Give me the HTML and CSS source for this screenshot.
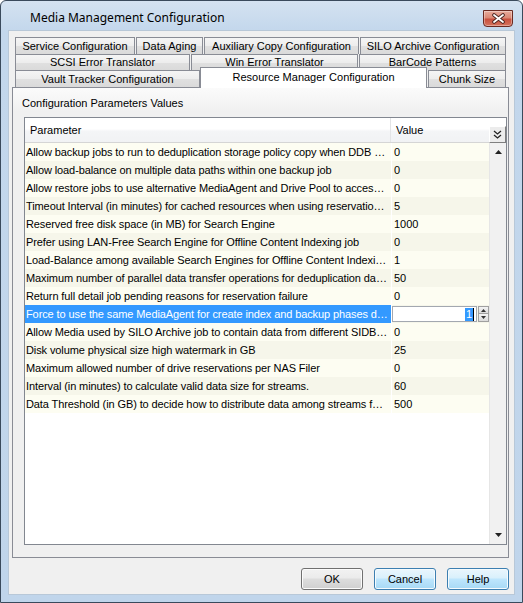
FILE: index.html
```html
<!DOCTYPE html>
<html>
<head>
<meta charset="utf-8">
<link rel="stylesheet" href="styles.css">
</head>
<body>
<div class="window">
  <div class="titlebar">
    <span class="title">Media Management Configuration</span>
    <div class="close">
      <svg width="13" height="11" viewBox="0 0 13 11">
        <path d="M2 2 L11 9 M11 2 L2 9" stroke="#4a2420" stroke-width="3.6" stroke-linecap="round" fill="none"/>
        <path d="M2 2 L11 9 M11 2 L2 9" stroke="#ffffff" stroke-width="1.8" stroke-linecap="round" fill="none"/>
      </svg>
    </div>
  </div>
  <div class="client">
    <div class="tabs">
      <div class="tab-row row1">
        <div class="tab t-service">Service Configuration</div>
        <div class="tab t-aging">Data Aging</div>
        <div class="tab t-aux">Auxiliary Copy Configuration</div>
        <div class="tab t-silo">SILO Archive Configuration</div>
      </div>
      <div class="tab-row row2">
        <div class="tab t-scsi">SCSI Error Translator</div>
        <div class="tab t-win">Win Error Translator</div>
        <div class="tab t-barcode">BarCode Patterns</div>
      </div>
      <div class="tab-row row3">
        <div class="tab t-vault">Vault Tracker Configuration</div>
        <div class="tab t-resource selected">Resource Manager Configuration</div>
        <div class="tab t-chunk">Chunk Size</div>
      </div>
    </div>
    <div class="panel">
      <div class="group-label">Configuration Parameters Values</div>
      <div class="grid">
        <div class="grid-main">
          <div class="header">
            <div class="hcell hparam">Parameter</div>
            <div class="hcell hvalue">Value</div>
          </div>
          <div class="rows">
            <div class="row"><div class="cparam">Allow backup jobs to run to deduplication storage policy copy when DDB …</div><div class="cvalue">0</div></div>
            <div class="row"><div class="cparam">Allow load-balance on multiple data paths within one backup job</div><div class="cvalue">0</div></div>
            <div class="row"><div class="cparam">Allow restore jobs to use alternative MediaAgent and Drive Pool to acces…</div><div class="cvalue">0</div></div>
            <div class="row"><div class="cparam">Timeout Interval (in minutes) for cached resources when using reservatio…</div><div class="cvalue">5</div></div>
            <div class="row"><div class="cparam">Reserved free disk space (in MB) for Search Engine</div><div class="cvalue">1000</div></div>
            <div class="row"><div class="cparam">Prefer using LAN-Free Search Engine for Offline Content Indexing job</div><div class="cvalue">0</div></div>
            <div class="row"><div class="cparam">Load-Balance among available Search Engines for Offline Content Indexi…</div><div class="cvalue">1</div></div>
            <div class="row"><div class="cparam">Maximum number of parallel data transfer operations for deduplication da…</div><div class="cvalue">50</div></div>
            <div class="row"><div class="cparam">Return full detail job pending reasons for reservation failure</div><div class="cvalue">0</div></div>
            <div class="row sel"><div class="cparam">Force to use the same MediaAgent for create index and backup phases d…</div>
              <div class="cvalue editcell">
                <div class="edit"><span class="hl">1</span><span class="caret"></span></div>
                <div class="spin">
                  <div class="spin-btn"><svg width="5" height="3" viewBox="0 0 5 3"><path d="M0 3 L2.5 0 L5 3 Z" fill="#333"/></svg></div>
                  <div class="spin-btn"><svg width="5" height="3" viewBox="0 0 5 3"><path d="M0 0 L2.5 3 L5 0 Z" fill="#333"/></svg></div>
                </div>
              </div>
            </div>
            <div class="row"><div class="cparam">Allow Media used by SILO Archive job to contain data from different SIDB…</div><div class="cvalue">0</div></div>
            <div class="row"><div class="cparam">Disk volume physical size high watermark in GB</div><div class="cvalue">25</div></div>
            <div class="row"><div class="cparam">Maximum allowed number of drive reservations per NAS Filer</div><div class="cvalue">0</div></div>
            <div class="row"><div class="cparam">Interval (in minutes) to calculate valid data size for streams.</div><div class="cvalue">60</div></div>
            <div class="row"><div class="cparam">Data Threshold (in GB) to decide how to distribute data among streams f…</div><div class="cvalue">500</div></div>
          </div>
        </div>
        <div class="vscroll">
          <div class="vs-head">
            <div class="chev">
              <svg width="9" height="9" viewBox="0 0 9 9">
                <path d="M1 1 L4.5 4 L8 1 M1 5 L4.5 8 L8 5" stroke="#222" stroke-width="1.3" fill="none"/>
              </svg>
            </div>
          </div>
          <div class="vs-track">
            <div class="vs-arrow"><svg width="7" height="4" viewBox="0 0 7 4"><path d="M0 4 L3.5 0 L7 4 Z" fill="#222"/></svg></div>
            <div class="vs-arrow"><svg width="7" height="4" viewBox="0 0 7 4"><path d="M0 0 L3.5 4 L7 0 Z" fill="#222"/></svg></div>
          </div>
        </div>
      </div>
    </div>
    <div class="buttons">
      <div class="btn btn-gray">OK</div>
      <div class="btn btn-blue">Cancel</div>
      <div class="btn btn-blue">Help</div>
    </div>
  </div>
</div>
</body>
</html>
```

FILE: styles.css
```css
* { box-sizing: border-box; }
html, body { margin: 0; padding: 0; }
body {
  width: 523px;
  height: 603px;
  overflow: hidden;
  background: #ffffff;
  font-family: "Liberation Sans", Arial, sans-serif;
  font-size: 11px;
  color: #000;
}

.window {
  width: 523px;
  height: 603px;
  border: 1px solid #3a4a5c;
  border-radius: 6px 6px 0 0;
  background: linear-gradient(#d4e2f1, #c3d7ec 30px, #c0d5eb);
  display: flex;
  flex-direction: column;
  padding: 0 7px 7px 7px;
}

.titlebar {
  height: 29px;
  margin: 0 -7px;
  padding: 0 9px 0 29px;
  display: flex;
  align-items: flex-start;
}
.title {
  font-family: "Noto Sans", "Open Sans", sans-serif;
  font-size: 12px;
  line-height: 16px;
  margin-top: 9px;
  color: #000;
}
.close {
  margin-left: auto;
  margin-top: 9px;
  width: 30px;
  height: 17px;
  border: 1px solid #6a2a22;
  border-radius: 0 0 4px 4px;
  background: linear-gradient(#e8ab9c 0%, #db8875 45%, #c9503e 55%, #d5735e 100%);
  box-shadow: inset 0 0 0 1px rgba(255,255,255,0.35);
  display: flex;
  align-items: center;
  justify-content: center;
}

.client {
  height: 565px;
  background: #f0f0f0;
  border: 1px solid #b8c8d8;
  padding: 6px 5px 4px 3px;
  display: flex;
  flex-direction: column;
}

/* tabs */
.tabs {
  margin: 0 0 0 3px;
  width: 491px;
  display: flex;
  flex-direction: column;
}
.tab-row {
  display: flex;
  gap: 1px;
  align-items: flex-start;
}
.row1 { height: 17px; }
.row2 { height: 16px; }
.row3 { height: 17px; gap: 0; }
.tab {
  border: 1px solid #898c95;
  border-bottom: none;
  text-align: center;
  white-space: nowrap;
  overflow: hidden;
  background: linear-gradient(#f5f5f5 0%, #ededed 50%, #e0e0e0 52%, #dadada 100%);
}
.row1 .tab { height: 17px; line-height: 16px; }
.row2 .tab { height: 16px; line-height: 15px; }
.row3 .tab { height: 17px; line-height: 16px; }
.t-service { width: 120px; }
.t-aging { width: 67px; }
.t-aux { width: 155px; }
.t-silo { width: 146px; }
.t-scsi { width: 175px; }
.t-win { width: 167px; }
.t-barcode { width: 147px; }
.t-vault { width: 185px; }
.t-resource { width: 227px; }
.t-chunk { width: 78px; margin-left: 1px; }
.row3 .tab.selected {
  position: relative;
  z-index: 2;
  height: 21px;
  margin-top: -3px;
  line-height: 16px;
  padding-top: 1px;
  background: #ffffff;
}

/* panel */
.panel {
  height: 471px;
  border: 1px solid #898c95;
  background: linear-gradient(#fbfbfb, #f0f0f0 24px);
  padding: 8px 1px 12px 11px;
  display: flex;
  flex-direction: column;
}
.group-label {
  height: 14px;
  line-height: 14px;
  margin-left: -2px;
  margin-bottom: 7px;
}

.grid {
  width: 483px;
  height: 428px;
  border: 1px solid #828790;
  background: #ffffff;
  display: flex;
}
.grid-main {
  width: 464px;
  display: flex;
  flex-direction: column;
}
.header {
  height: 25px;
  display: flex;
  border-bottom: 1px solid #d5d5d5;
  background: linear-gradient(#ffffff 0%, #ffffff 45%, #f4f5f7 55%, #f1f2f4 100%);
}
.hcell {
  line-height: 24px;
  white-space: nowrap;
}
.hparam {
  width: 366px;
  padding-left: 5px;
  border-right: 1px solid #e3e4e6;
}
.hvalue {
  width: 98px;
  padding-left: 5px;
}

.rows { display: flex; flex-direction: column; }
.row {
  height: 18px;
  display: flex;
  background: #fdfdf2;
}
.row:nth-child(even) { background: #f6f6ea; }
.cparam {
  width: 366px;
  padding-left: 1px;
  line-height: 18px;
  white-space: nowrap;
  overflow: hidden;
  letter-spacing: -0.1px;
}
.cvalue {
  width: 98px;
  padding-left: 2px;
  line-height: 18px;
  white-space: nowrap;
  border-left: 1px solid #ffffff;
}
.row.sel .cparam {
  background: #3399ff;
  color: #ffffff;
}
.editcell {
  display: flex;
  align-items: flex-start;
  padding-left: 0;
  background: #fdfdf2;
}
.row.sel { background: #f6f6ea; }
.row.sel .editcell { background: #f6f6ea; }
.edit {
  width: 86px;
  height: 16px;
  margin-top: 1px;
  border: 1px solid #a3a8b0;
  background: #ffffff;
  display: flex;
  align-items: center;
  justify-content: flex-end;
  padding-right: 2px;
  line-height: 13px;
}
.hl {
  background: #3399ff;
  color: #ffffff;
  padding: 0 1px;
}
.caret {
  width: 1px;
  height: 13px;
  background: #000;
}
.spin {
  width: 11px;
  height: 16px;
  margin-top: 1px;
  margin-left: 1px;
  display: flex;
  flex-direction: column;
}
.spin-btn {
  height: 8px;
  border: 1px solid #a0a0a0;
  background: linear-gradient(#f4f4f4, #dcdcdc);
  display: flex;
  align-items: center;
  justify-content: center;
}
.spin-btn + .spin-btn { border-top: none; height: 8px; }

.vscroll {
  width: 17px;
  display: flex;
  flex-direction: column;
}
.vs-head {
  height: 25px;
  display: flex;
  align-items: flex-end;
  background: linear-gradient(#ffffff 0%, #ffffff 45%, #f4f5f7 55%, #f1f2f4 100%);
}
.chev {
  width: 17px;
  height: 17px;
  border-left: 1px solid #ffffff;
  border-top: 1px solid #ffffff;
  border-right: 1px solid #7f7f7f;
  border-bottom: 1px solid #7f7f7f;
  background: #ececec;
  display: flex;
  align-items: center;
  justify-content: center;
}
.vs-track {
  flex: 1;
  background: #f1f1f1;
  border-left: 1px solid #e6e6e6;
  display: flex;
  flex-direction: column;
  justify-content: space-between;
  align-items: center;
  padding: 7px 0 7px 0;
}
.vs-arrow { height: 4px; display: flex; }

/* buttons */
.buttons {
  margin-top: 10px;
  height: 22px;
  display: flex;
  justify-content: flex-end;
  gap: 11px;
}
.btn {
  width: 62px;
  height: 22px;
  border-radius: 3px;
  text-align: center;
  line-height: 20px;
}
.btn-gray {
  border: 1px solid #707070;
  background: linear-gradient(#f2f2f2 0%, #ebebeb 45%, #dddddd 50%, #cfcfcf 100%);
  box-shadow: inset 0 0 0 1px #fbfbfb;
}
.btn-blue {
  border: 1px solid #3c7fb1;
  background: linear-gradient(#eaf6fd 0%, #d9f0fc 45%, #bee6fd 50%, #a7d9f5 100%);
  box-shadow: inset 0 0 0 1px #f5fbfe;
}
```
